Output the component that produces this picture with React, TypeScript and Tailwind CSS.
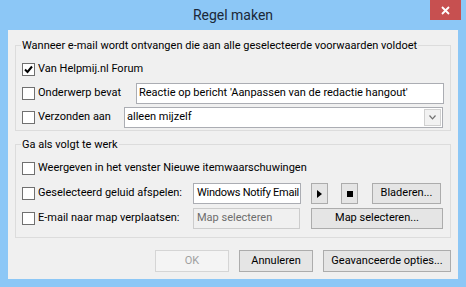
import React from "react";

const font = { fontFamily: 'Roboto, "Liberation Sans", Arial, sans-serif' };

const Check = ({ checked = false }: { checked?: boolean }) => (
  <span className="flex h-[13px] w-[13px] shrink-0 items-center justify-center border border-[#707070] bg-white">
    {checked && (
      <svg width="9" height="9" viewBox="0 0 9 9">
        <path d="M1 4.5 L3.5 7 L8 1.5" fill="none" stroke="#000" strokeWidth="2" />
      </svg>
    )}
  </span>
);

const Label = ({ text, checked, w }: { text: string; checked?: boolean; w?: string }) => (
  <div className={`flex shrink-0 items-center gap-[3px] ${w ?? ""}`}>
    <Check checked={checked} />
    <span className="whitespace-nowrap">{text}</span>
  </div>
);

const Btn = ({ children, className = "", disabled = false }: { children: React.ReactNode; className?: string; disabled?: boolean }) => (
  <button
    className={`flex items-center justify-center whitespace-nowrap border ${
      disabled ? "border-[#d5d5d5] bg-[#f4f4f4] text-[#a0a0a0]" : "border-[#acacac] bg-[#e5e5e5] text-black"
    } ${className}`}
  >
    {children}
  </button>
);

export default function App() {
  return (
    <div className="flex h-[287px] w-[466px] flex-col bg-[#8cc7f6] text-[11px] text-black" style={font}>
      {/* title bar */}
      <div className="relative flex h-[30px] shrink-0 items-center justify-center">
        <span className="text-[14px] text-[#1b2838]">Regel maken</span>
        <div className="absolute right-[5px] top-0 flex h-[20px] w-[31px] items-center justify-center bg-[#c75050]">
          <svg width="9" height="9" viewBox="0 0 9 9">
            <path d="M1 1 L8 8 M8 1 L1 8" stroke="#fff" strokeWidth="1.8" />
          </svg>
        </div>
      </div>

      {/* client area */}
      <div className="ml-[8px] flex h-[249px] w-[450px] flex-col bg-[#f0f0f0] px-[7px]">
        <fieldset className="mt-[8px] border border-[#dcdcdc] px-[6px] pb-[2px]">
          <legend className="-ml-[1px] whitespace-nowrap px-[1px] leading-[15px]">
            Wanneer e-mail wordt ontvangen die aan alle geselecteerde voorwaarden voldoet
          </legend>
          <div className="mt-[6px] flex flex-col gap-[3px]">
            <div className="flex h-[21px] items-center">
              <Label text="Van Helpmij.nl Forum" checked />
            </div>
            <div className="flex h-[21px] items-center">
              <Label text="Onderwerp bevat" w="w-[114px]" />
              <div className="flex h-[21px] flex-1 items-center overflow-hidden whitespace-nowrap border border-[#abadb3] bg-white px-[2px]">
                Reactie op bericht 'Aanpassen van de redactie hangout'
              </div>
            </div>
            <div className="flex h-[21px] items-center">
              <Label text="Verzonden aan" w="w-[102px]" />
              <div className="mr-[1px] flex h-[21px] flex-1 items-center border border-[#abadb3] bg-white pl-[2px] pr-[1px]">
                <span className="flex-1">alleen mijzelf</span>
                <span className="flex h-[17px] w-[17px] items-center justify-center border border-[#d0d0d0] bg-[#f2f2f2]">
                  <svg width="7" height="5" viewBox="0 0 7 5">
                    <path d="M0.5 0.5 L3.5 3.8 L6.5 0.5" fill="none" stroke="#707070" strokeWidth="1.2" />
                  </svg>
                </span>
              </div>
            </div>
          </div>
        </fieldset>

        <fieldset className="mt-[6px] border border-[#dcdcdc] px-[6px] pb-[8px]">
          <legend className="-ml-[1px] px-[1px] leading-[15px]">Ga als volgt te werk</legend>
          <div className="mt-[6px] flex flex-col gap-[4px]">
            <div className="flex h-[21px] items-center">
              <Label text="Weergeven in het venster Nieuwe itemwaarschuwingen" />
            </div>
            <div className="flex h-[21px] items-center">
              <Label text="Geselecteerd geluid afspelen:" w="w-[171px]" />
              <div className="flex h-[21px] w-[108px] items-center overflow-hidden whitespace-nowrap border border-[#abadb3] bg-white pl-[3px] pr-[1px] tracking-[-0.25px]">
                Windows Notify Email
              </div>
              <Btn className="ml-[10px] h-[21px] w-[17px]">
                <svg width="5" height="8" viewBox="0 0 5 8">
                  <path d="M0 0 L5 4 L0 8 Z" fill="#000" />
                </svg>
              </Btn>
              <Btn className="ml-[13px] h-[21px] w-[17px]">
                <span className="h-[6px] w-[6px] bg-black" />
              </Btn>
              <Btn className="ml-[14px] h-[21px] w-[69px]">Bladeren...</Btn>
            </div>
            <div className="flex h-[21px] items-center">
              <Label text="E-mail naar map verplaatsen:" w="w-[171px]" />
              <div className="flex h-[21px] w-[107px] items-center overflow-hidden whitespace-nowrap border border-[#cccccc] bg-[#f0f0f0] px-[3px] text-[#6d6d6d]">
                Map selecteren
              </div>
              <Btn className="ml-[11px] h-[21px] w-[132px]">Map selecteren...</Btn>
            </div>
          </div>
        </fieldset>

        <div className="mt-[12px] flex justify-end gap-[10px]">
          <Btn disabled className="h-[22px] w-[74px]">OK</Btn>
          <Btn className="h-[22px] w-[74px]">Annuleren</Btn>
          <Btn className="h-[22px] w-[128px]">Geavanceerde opties...</Btn>
        </div>
      </div>
    </div>
  );
}
